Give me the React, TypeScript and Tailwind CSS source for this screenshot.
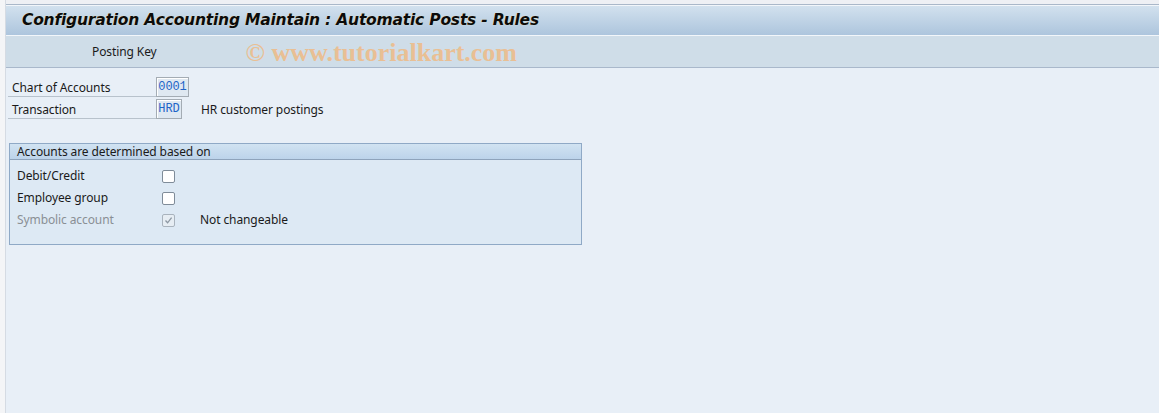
import React from "react";

const FONT = { fontFamily: '"Noto Sans", "DejaVu Sans", sans-serif' };

function Field({ value, width }: { value: string; width: string }) {
  return (
    <span
      className={`flex h-[20px] ${width} items-center justify-center border border-[#a4acb4] bg-[#dfe8f1] text-[12px] text-[#1e64c8] shadow-[inset_1px_1px_0_#ffffff]`}
      style={{ fontFamily: '"Liberation Mono", monospace' }}
    >
      {value}
    </span>
  );
}

function Checkbox({ checked, disabled }: { checked?: boolean; disabled?: boolean }) {
  return (
    <span
      className={
        disabled
          ? "flex size-[13px] items-center justify-center rounded-[2px] border border-[#a9b3bd] bg-[#e6edf3]"
          : "flex size-[13px] items-center justify-center rounded-[2px] border border-[#7f8c99] bg-white"
      }
    >
      {checked ? (
        <svg width="9" height="9" viewBox="0 0 9 9" fill="none">
          <path d="M1.5 4.5 L3.6 6.8 L7.6 1.6" stroke="#8c97a2" strokeWidth="1.3" />
        </svg>
      ) : null}
    </span>
  );
}

export default function App() {
  return (
    <div className="flex h-[413px] w-[1159px] bg-[#f2f4f7] tracking-[-0.1px]" style={FONT}>
      <div className="w-[5px] shrink-0 bg-[#f4f5f7]" />
      <div className="flex min-w-0 flex-1 flex-col border-l border-[#d5dbe3] bg-[#e8eff7]">
        {/* title bar */}
        <div className="h-[4px] bg-[#eef0f4]" />
        <div className="h-px bg-[#aab8c9]" />
        <div className="h-[30px] border-t border-[#f2f6fa] bg-gradient-to-b from-[#d2e1ee] to-[#adc5dd] pl-[16px]">
          <h1
            className="pt-[3px] text-[15.5px] font-bold italic leading-[22px] text-[#0b0b0b] [text-shadow:0_0_1px_#fff1c0]"
            style={{ fontFamily: '"DejaVu Sans", sans-serif', letterSpacing: "-0.2px" }}
          >
            Configuration Accounting Maintain : Automatic Posts - Rules
          </h1>
        </div>
        {/* toolbar */}
        <div className="flex h-[33px] items-center border-t border-[#f2f6fa] border-b border-b-[#a9b8cb] bg-[#cfdde8]">
          <span className="ml-[86px] text-[12px] text-[#1a1a1a]">Posting Key</span>
          <span
            className="ml-[89px] mt-[2px] text-[26px] font-bold leading-[30px] tracking-normal text-[#f2b678] opacity-75"
            style={{ fontFamily: '"Liberation Serif", serif' }}
          >
            © www.tutorialkart.com
          </span>
        </div>

        {/* fields */}
        <div className="flex flex-col gap-[2px] pt-[9px] pl-[2px]">
          <div className="flex items-end">
            <span className="w-[148px] border-b border-[#b8c2cc] pl-[4px] text-[12px] leading-[16px] text-[#1a1a1a]">
              Chart of Accounts
            </span>
            <Field value="0001" width="w-[33px]" />
          </div>
          <div className="flex items-end">
            <span className="w-[148px] border-b border-[#b8c2cc] pl-[4px] text-[12px] leading-[16px] text-[#1a1a1a]">
              Transaction
            </span>
            <Field value="HRD" width="w-[26px]" />
            <span className="mb-[1px] ml-[19px] text-[12px] leading-[16px] text-[#1a1a1a]">
              HR customer postings
            </span>
          </div>
        </div>

        {/* group box */}
        <div className="ml-[3px] mt-[24px] w-[573px] border border-[#8fa9c6] bg-[#dde9f4]">
          <div className="h-[16px] border-b border-[#8ea3bb] bg-gradient-to-b from-[#d1e3f2] to-[#bcd3ea] pl-[7px] text-[12px] leading-[15px] text-[#1a1a1a]">
            Accounts are determined based on
          </div>
          <div className="flex flex-col gap-[6px] pb-[16px] pl-[7px] pt-[8px] text-[12px] leading-[16px]">
            <div className="flex items-center">
              <span className="w-[145px] text-[#1a1a1a]">Debit/Credit</span>
              <Checkbox />
            </div>
            <div className="flex items-center">
              <span className="w-[145px] text-[#1a1a1a]">Employee group</span>
              <Checkbox />
            </div>
            <div className="flex items-center">
              <span className="w-[145px] text-[#8a8f95]">Symbolic account</span>
              <Checkbox checked disabled />
              <span className="ml-[25px] text-[#1a1a1a]">Not changeable</span>
            </div>
          </div>
        </div>
      </div>
    </div>
  );
}
